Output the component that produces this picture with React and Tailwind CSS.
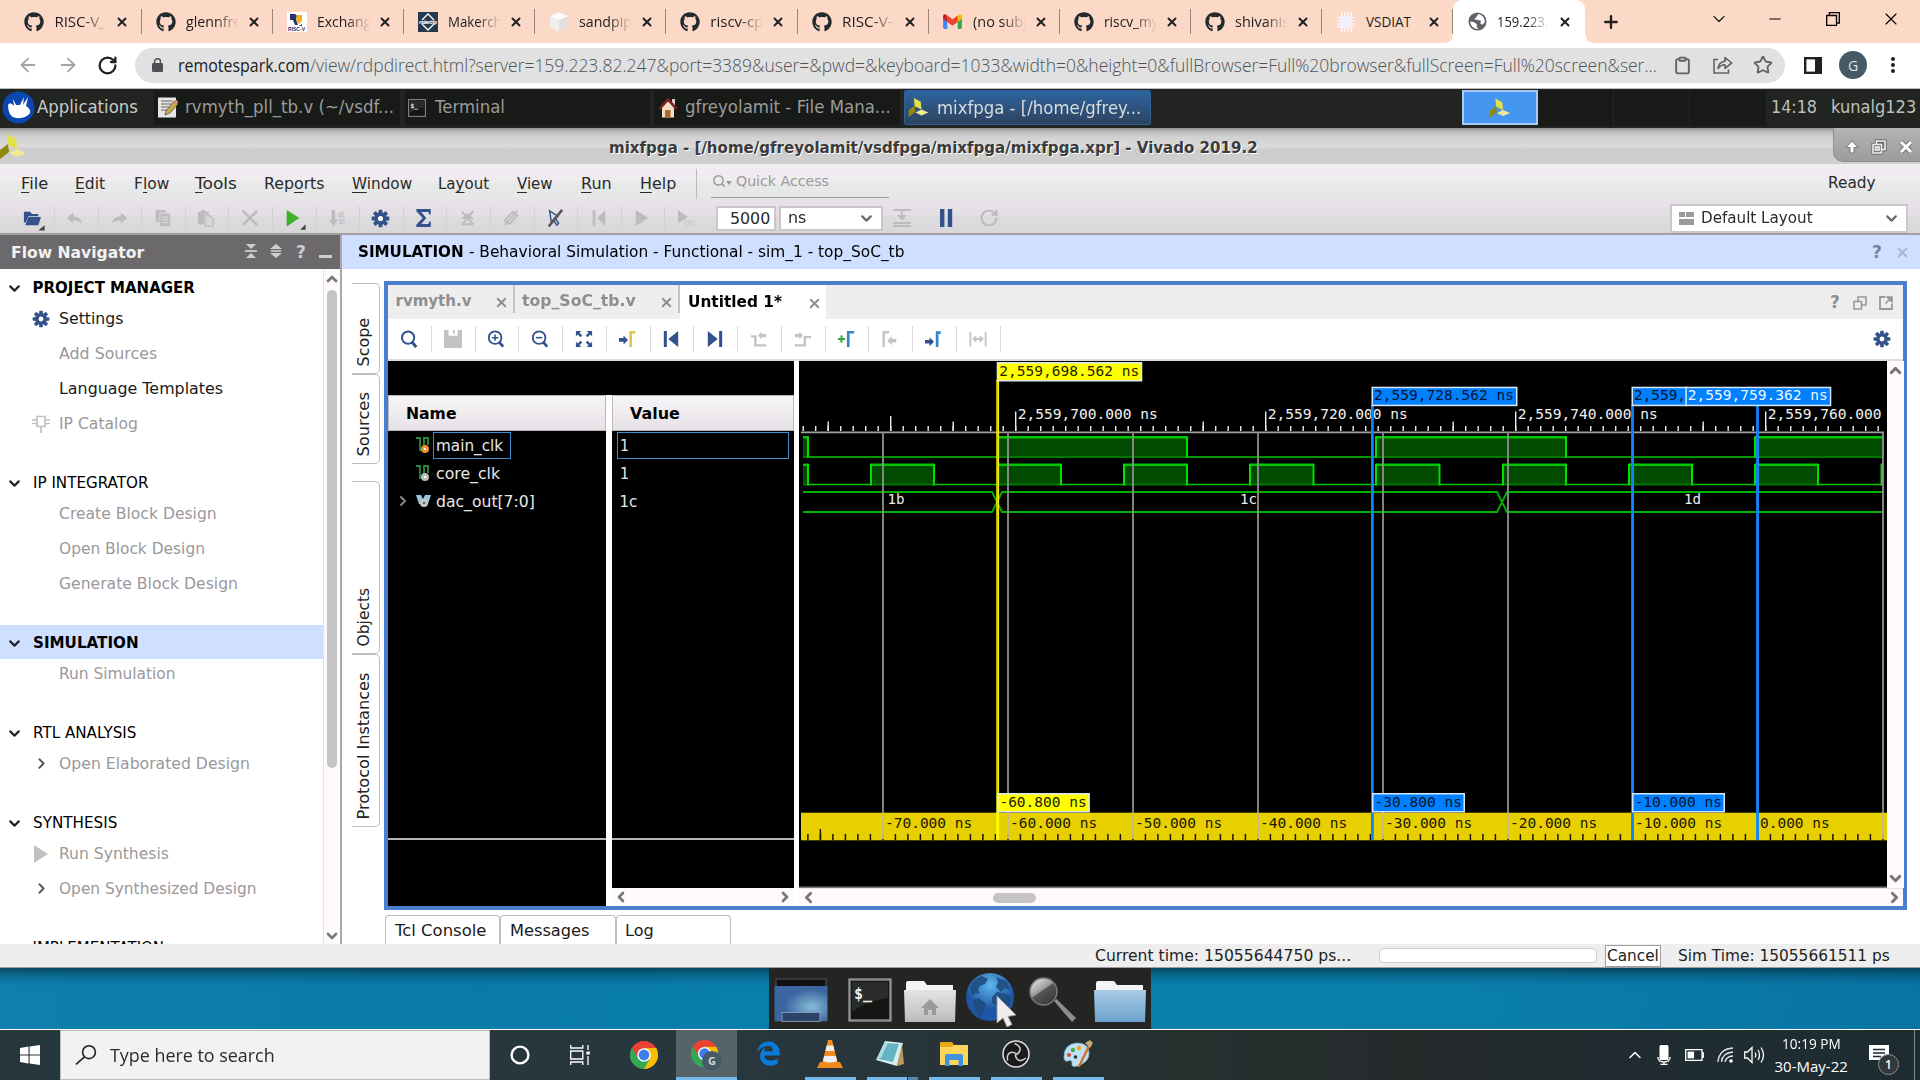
import React, { useLayoutEffect, useRef, useState } from "react";
import { FaGithub } from "react-icons/fa";
import { FaEdgeLegacy } from "react-icons/fa6";
import {
  ArrowLeft, ArrowRight, RotateCw, Clipboard, Star, Plus, X, Minus, ChevronDown, ChevronUp,
  ChevronLeft, ChevronRight, Search,
} from "lucide-react";

const UI = "font-['DejaVu_Sans',sans-serif]";
const WEB = "font-['Open_Sans','Noto_Sans',sans-serif]";

/* Single line of text stretched or condensed to an exact width. */
function Fit({ w, dy = 1, className = "", children }) {
  const ref = useRef(null);
  const [scale, setScale] = useState(1);
  useLayoutEffect(() => {
    const measure = () => {
      const n = ref.current && ref.current.offsetWidth;
      if (n) setScale(w / n);
    };
    measure();
    document.fonts.ready.then(measure);
  }, [w]);
  return (
    <span className={"inline-block shrink-0 whitespace-pre leading-none " + className} style={{ width: w }}>
      <span ref={ref} className="inline-block origin-left" style={{ transform: `translateY(${dy}px) scaleX(${scale})` }}>
        {children}
      </span>
    </span>
  );
}

function Vivado({ className }) {
  return (
    <svg viewBox="0 0 26 25" className={className}>
      <path d="M7 0 L16 5 L17 15 L8 11Z" fill="#e3e04c" />
      <path d="M8 10 L9 18 L0 25 L0 16Z" fill="#8d8a0c" />
      <path d="M9 19 L17 15 L26 19 L17 23Z" fill="#efeb92" />
    </svg>
  );
}

function Gear({ className = "w-[18px] h-[18px]" }) {
  return (
    <svg viewBox="-10 -10 20 20" className={className}>
      {[0, 45, 90, 135].map((a) => (
        <rect key={a} x="-2" y="-9.3" width="4" height="18.6" rx="0.8" fill="#33528c" transform={`rotate(${a})`} />
      ))}
      <circle r="6.6" fill="#33528c" />
      <circle r="2.7" fill="#fff" />
    </svg>
  );
}

/* ---------- browser ---------- */

const GmailIcon = () => (
  <svg viewBox="0 0 20 16" className="w-[19px] h-[15px]">
    <path d="M0 2 L4.5 5 V16 H1.5 Q0 16 0 14.5Z" fill="#4285f4" />
    <path d="M20 2 L15.5 5 V16 H18.5 Q20 16 20 14.5Z" fill="#34a853" />
    <path d="M15.5 1.5 Q20 -1.5 20 2.5 V5 L15.5 8.5Z" fill="#fbbc04" />
    <path d="M4.5 1.5 Q0 -1.5 0 2.5 V5 L4.5 8.5Z" fill="#c5221f" />
    <path d="M4.5 1.5 L10 5.7 L15.5 1.5 V8.5 L10 12.5 L4.5 8.5Z" fill="#ea4335" />
  </svg>
);
const RiscIcon = () => (
  <svg viewBox="0 0 20 20" className="w-5 h-5">
    <rect width="20" height="20" fill="#fff" />
    <path d="M3 2 H8 Q11 3 9 7 L11 13 H8 L6 8 H3Z" fill="#283272" />
    <path d="M10 3 H15 V9 L12 12 L9 8Z" fill="#f6b21a" />
    <path d="M15 4 V12 L12 14 H15Z" fill="#283272" />
    <text x="1" y="18.6" fontSize="5" fontWeight="bold" fill="#283272" fontFamily="Liberation Sans, sans-serif" textLength="17">RISC-V</text>
  </svg>
);
const MakerIcon = () => (
  <svg viewBox="0 0 20 20" className="w-5 h-5">
    <rect width="20" height="20" fill="#24394f" />
    <path d="M4 8 L10 2 L16 8 M4 12 L10 18 L16 12" fill="none" stroke="#fff" strokeWidth="1.3" />
    <text x="1" y="11.6" fontSize="4.6" fontWeight="bold" fill="#fff" fontFamily="Liberation Sans, sans-serif" textLength="18">makerchip</text>
  </svg>
);
const CubeIcon = () => (
  <svg viewBox="0 0 20 20" className="w-5 h-5">
    <path d="M10 0.5 L19 4 V15 L10 19.5 L1 15 V4Z" fill="#f1efed" />
    <path d="M10 8 L19 4 V15 L10 19.5Z" fill="#e2dfdc" />
    <path d="M10 0.5 L19 4 L10 8 L1 4Z" fill="#fbfaf9" />
  </svg>
);
const ChipIcon = () => (
  <svg viewBox="0 0 20 20" className="w-5 h-5">
    <path d="M6 0 V20 M9 0 V20 M12 0 V20 M15 0 V20 M1 6 H19 M1 9 H19 M1 12 H19 M1 15 H19" stroke="#fff" strokeWidth="1.2" />
    <rect x="4" y="4" width="12" height="12" fill="#f5eefc" />
  </svg>
);
const GlobeIcon = () => (
  <svg viewBox="0 0 20 20" className="w-[19px] h-[19px]">
    <circle cx="10" cy="10" r="9.5" fill="#5f6368" />
    <path d="M11 2 L9 5 L6.5 7.5 L10 8.5 L13.5 9 L13 12 L15 13.5 L17.5 11 A8 8 0 0 0 11 2Z M2.3 10 L6 10.5 L9.5 13 L9 15.5 L11 17.8 A8 8 0 0 1 2.3 10Z" fill="#fff" />
  </svg>
);
const Hub = () => <FaGithub className="w-5 h-5 text-[#24292e]" />;

const TABS = [
  [<Hub />, "RISC-V_", 51, true],
  [<Hub />, "glennfre", 55, true],
  [<RiscIcon />, "Exchang", 54, true],
  [<MakerIcon />, "Makerch", 54, true],
  [<CubeIcon />, "sandpip", 53, true],
  [<Hub />, "riscv-cp", 53, true],
  [<Hub />, "RISC-V-", 51, true],
  [<GmailIcon />, "(no subj", 54, true],
  [<Hub />, "riscv_my", 55, true],
  [<Hub />, "shivanis", 54, true],
  [<ChipIcon />, "VSDIAT", 45, false],
];

function Tab({ icon, text, w, fade, active }) {
  return (
    <div className={"flex items-center shrink-0 w-[131.2px] h-full pl-[14px] " + (active ? "bg-white rounded-t-[9px]" : "")}>
      <span className="w-[20px] flex justify-center shrink-0">{icon}</span>
      <span className={"ml-[10px] w-[54px] shrink-0 overflow-hidden py-1 flex " + (fade ? "[mask-image:linear-gradient(to_right,black_55%,transparent_98%)]" : "")}>
        <Fit w={w} dy={-0.5} className={WEB + " text-[15px] leading-[20px] text-[#1c1c1e]"}>{text}</Fit>
      </span>
      <X className="ml-[7px] w-[14px] h-[14px] text-[#202124] shrink-0" strokeWidth={3.4} />
      {!active && <span className="ml-auto w-px h-[25px] bg-[#98847a]" />}
    </div>
  );
}

function Browser() {
  return (
    <>
      <div className="h-[43px] bg-[#fcd9c7] flex pl-[10.4px]">
        {TABS.map(([icon, text, w, fade], i) => (
          <Tab key={i} icon={icon} text={text} w={w} fade={fade} />
        ))}
        <span className="w-0 flex justify-end items-end shrink-0"><svg viewBox="0 0 10 10" className="w-[10px] h-[10px] shrink-0"><path d="M10 0 V10 H0 Q10 10 10 0Z" fill="#fff" /></svg></span>
        <Tab icon={<GlobeIcon />} text="159.223." w={51} fade active />
        <svg viewBox="0 0 10 10" className="w-[10px] h-[10px] shrink-0 self-end"><path d="M0 0 V10 H10 Q0 10 0 0Z" fill="#fff" /></svg>
        <div className="flex items-center flex-1">
          <Plus className="ml-[6px] w-[20px] h-[20px] text-[#202124]" strokeWidth={2.8} />
          <ChevronDown className="ml-[88px] w-[20px] h-[20px] text-[#202124] -mt-1.5" strokeWidth={1.5} />
          <Minus className="ml-[37px] w-[18px] h-[18px] text-black -mt-1.5" strokeWidth={1.6} />
          <svg viewBox="0 0 14 14" className="ml-[42px] w-[14px] h-[14px] -mt-1.5">
            <path d="M0.7 3.5 H10.5 V13.3 H0.7Z M3.3 3.2 V0.7 H13.3 V11 H10.8" fill="none" stroke="#000" strokeWidth="1.3" />
          </svg>
          <X className="ml-[41px] w-[20px] h-[20px] text-black -mt-1.5" strokeWidth={1.4} />
        </div>
      </div>
      <div className="h-[46px] pb-px bg-white border-b border-[#bdbdbd] flex items-center">
        <ArrowLeft className="ml-[17px] w-[22px] h-[22px] text-[#a5a5a5] shrink-0" strokeWidth={2} />
        <ArrowRight className="ml-[18px] w-[22px] h-[22px] text-[#a5a5a5] shrink-0" strokeWidth={2} />
        <RotateCw className="ml-[18px] w-[21px] h-[21px] text-[#202124] shrink-0" strokeWidth={2.6} />
        <div className="ml-[17px] w-[1650px] h-[35px] rounded-full bg-[#e1e1e1] flex items-center shrink-0">
          <svg viewBox="0 0 11 14" className="ml-[17px] w-[11px] h-[14px]">
            <rect y="5" width="11" height="9" rx="1.2" fill="#4d5156" />
            <path d="M2.6 5 V3.3 Q2.6 0.8 5.5 0.8 T8.4 3.3 V5" fill="none" stroke="#4d5156" strokeWidth="1.4" />
          </svg>
          <Fit w={132} dy={-0.5} className={WEB + " ml-[15px] text-[18px] text-[#202124]"}>remotespark.com</Fit>
          <Fit w={1347} dy={-0.5} className={WEB + " text-[18px] font-light text-[#505357]"}>/view/rdpdirect.html?server=159.223.82.247&port=3389&user=&pwd=&keyboard=1033&width=0&height=0&fullBrowser=Full%20browser&fullScreen=Full%20screen&ser...</Fit>
          <Clipboard className="ml-[16px] w-[19px] h-[19px] text-[#5f6368]" strokeWidth={2.4} />
          <svg viewBox="0 0 20 18" className="ml-[21px] w-[20px] h-[18px]">
            <path d="M5 3.5 H1 V17 H15.5 V13.5" fill="none" stroke="#5f6368" strokeWidth="1.6" />
            <path d="M5 12.5 Q5.5 6 12 5.2 V1.5 L18.7 7 L12 12.3 V8.8 Q8 8.7 5 12.5Z" fill="none" stroke="#5f6368" strokeWidth="1.6" strokeLinejoin="round" />
          </svg>
          <Star className="ml-[20px] w-[20px] h-[20px] text-[#5f6368]" strokeWidth={2.2} />
        </div>
        <svg viewBox="0 0 18 17" className="ml-[19px] w-[18px] h-[17px]">
          <rect x="1.2" y="1.2" width="15.6" height="14.6" fill="#fff" stroke="#202124" strokeWidth="2.4" />
          <rect x="11" y="0" width="7" height="17" fill="#202124" />
        </svg>
        <div className={WEB + " ml-[17px] w-[28px] h-[28px] rounded-full bg-[#455a64] text-[#dfe6ea] text-[14px] flex items-center justify-center"}>G</div>
        <svg viewBox="0 0 4 16" className="ml-[24px] w-[4px] h-[16px]">
          <circle cx="2" cy="2" r="2" fill="#202124" /><circle cx="2" cy="8" r="2" fill="#202124" /><circle cx="2" cy="14" r="2" fill="#202124" />
        </svg>
      </div>
    </>
  );
}

/* ---------- remote desktop panel ---------- */

const TermIcon = ({ className }) => (
  <svg viewBox="0 0 44 44" className={className}>
    <rect x="1.5" y="1.5" width="41" height="41" fill="#151614" stroke="#8f8f8f" strokeWidth="2.4" />
    <path d="M4 4 H40 V20 Q20 22 4 34Z" fill="#2a2c29" />
    <text x="6" y="21" fontSize="15" fontWeight="bold" fill="#f0f0f0" fontFamily="DejaVu Sans Mono, monospace">$_</text>
  </svg>
);

function Panel() {
  return (
    <div className={UI + " h-[39px] bg-[#222421] flex items-center text-[17px] pb-[2px]"}>
      <svg viewBox="0 0 33 33" className="ml-[2px] w-[33px] h-[33px] shrink-0">
        <circle cx="16.5" cy="16.5" r="16" fill="#0a48b0" />
        <path d="M6 14 Q8 10 12 15 L11 8 L14 14 L18 14 L22 6 L21 14 L26 6 L24 15 Q29 18 28 22 Q24 28 14 27 Q6 26 6 14Z" fill="#fff" />
      </svg>
      <Fit w={101} dy={-0.5} className="ml-[2px] text-[#c9cac8]">Applications</Fit>
      <div className="ml-[16px] w-[246px] h-[35px] bg-[#181a18] flex items-center text-[#9b9c9a] shrink-0">
        <svg viewBox="0 0 20 21" className="ml-[4px] w-[20px] h-[21px]">
          <rect x="0" y="0.5" width="18" height="20" fill="#e6e6e4" />
          <path d="M3 4 H14 M3 7 H13 M3 10 H12 M3 13 H9" stroke="#8d8d8d" strokeWidth="1.3" />
          <path d="M8 14 L16 4 L20 7 L12 16 L7 18Z" fill="#c9a94c" stroke="#554" strokeWidth="0.8" />
          <circle cx="18" cy="5" r="2" fill="#d88" />
        </svg>
        <Fit w={209} dy={-0.5} className="ml-[7px]">rvmyth_pll_tb.v (~/vsdf...</Fit>
      </div>
      <div className="ml-[5px] w-[245px] h-[35px] bg-[#181a18] flex items-center text-[#9b9c9a] shrink-0">
        <TermIcon className="ml-[3px] w-[18px] h-[18px]" />
        <Fit w={70} dy={-0.5} className="ml-[9px]">Terminal</Fit>
      </div>
      <div className="ml-[4px] w-[246px] h-[35px] bg-[#181a18] flex items-center text-[#9b9c9a] shrink-0">
        <svg viewBox="0 0 18 20" className="ml-[5px] w-[18px] h-[20px]">
          <rect x="13" y="1" width="3" height="7" fill="#d8cfc6" />
          <path d="M3 9 L9 3 L15 9 V19.5 H3Z" fill="#f0ddc8" />
          <path d="M0.5 11 L9 1.5 L17.5 11" fill="none" stroke="#7c2320" strokeWidth="2.6" />
          <rect x="6" y="12" width="5.5" height="7.5" fill="#b0652e" />
        </svg>
        <Fit w={206} dy={-0.5} className="ml-[8px]">gfreyolamit - File Mana...</Fit>
      </div>
      <div className="ml-[4px] w-[247px] h-[35px] rounded-[2px] border border-[#2f6299] bg-linear-to-b from-[#2c64a0] to-[#2d435f] flex items-center text-[#dadbdc] shrink-0">
        <Vivado className="ml-[3px] w-[21px] h-[19px]" />
        <Fit w={204} dy={0} className="ml-[8px] mt-0.5">mixfpga - [/home/gfrey...</Fit>
      </div>
      <div className="ml-[311px] w-[76px] h-[35px] bg-[#4596f0] border-2 border-[#a9cbf2] flex items-center justify-center shrink-0">
        <Vivado className="w-[20px] h-[20px]" />
      </div>
      <div className="w-[228px] h-[36px] bg-[#181a18] flex shrink-0">
        <span className="w-[76px] border-r border-[#242624]" />
        <span className="w-[76px] border-r border-[#242624]" />
      </div>
      <Fit w={46} dy={-0.5} className="ml-[5px] text-[#bfc0be]">14:18</Fit>
      <Fit w={85} dy={-0.5} className="ml-[14px] text-[#bfc0be]">kunalg123</Fit>
    </div>
  );
}

function TitleBar() {
  return (
    <div className={UI + " h-[36px] flex items-start bg-[linear-gradient(#929292,#b9b9b9_10%,#d2d2d2_26%,#dadada_50%,#cdcdcd_60%,#cfcfcf)] text-[15px] font-bold text-[#3b3b3b]"}>
      <Vivado className="mt-[6px] w-[26px] h-[25px]" />
      <Fit w={649} className="ml-[582.5px] mt-[12px] [text-shadow:1px_1px_0_#fff]">mixfpga - [/home/gfreyolamit/vsdfpga/mixfpga/mixfpga.xpr] - Vivado 2019.2</Fit>
      <div className="ml-auto w-[87px] h-[34px] rounded-bl-[10px] border-l border-b border-[#8f8f8f] bg-linear-to-b from-[#b4b4b4] to-[#9c9c9c] flex items-center pl-[10px] pt-1 gap-[11px]">
        <svg viewBox="0 0 16 16" className="w-4 h-4"><path d="M8 2 L14 8.5 H10 V14 H6 V8.5 H2Z" fill="#fff" stroke="#777" /></svg>
        <svg viewBox="0 0 16 16" className="w-4 h-4"><path d="M5.5 5 V2 H14 V10.5 H11 M2 5.5 H10.5 V14 H2Z" fill="none" stroke="#6d6d6d" strokeWidth="3.4" /><path d="M5.5 5 V2 H14 V10.5 H11 M2 5.5 H10.5 V14 H2Z M4.5 8 H8 V11 H4.5Z" fill="none" stroke="#eee" strokeWidth="1.6" /></svg>
        <svg viewBox="0 0 16 16" className="w-4 h-4"><path d="M3 3 L13 13 M13 3 L3 13" stroke="#777" strokeWidth="5" /><path d="M3 3 L13 13 M13 3 L3 13" stroke="#fff" strokeWidth="3" /></svg>
      </div>
    </div>
  );
}

const MENU = [
  ["", "F", "ile", 27, 20.5], ["", "E", "dit", 30, 27], ["F", "l", "ow", 35, 29], ["", "T", "ools", 42, 26],
  ["Rep", "o", "rts", 61, 27.5], ["", "W", "indow", 60, 27], ["La", "y", "out", 51, 26], ["", "V", "iew", 36, 28],
  ["", "R", "un", 31, 27.5], ["", "H", "elp", 36, 28],
];
const G = "#bdbbbe";
const B = "#33528c";
const TOOLS = [
  <><path d="M1 3 H8 L10 5.5 H17 V8 H6 L3 15 H1Z" fill={B} /><path d="M6 9 H20 L17 18 H2.5Z" fill={B} /><path d="M24 18 V24 H17Z" fill="#444" /></>,
  <path d="M1 10 L8 4 V8 Q16 8 18 16 Q13 12 8 12.5 V16Z" fill={G} />,
  <path d="M19 10 L12 4 V8 Q4 8 2 16 Q7 12 12 12.5 V16Z" fill={G} />,
  <><path d="M2 1 H13 V4 H6 V15 H2Z" fill={G} /><path d="M7 5 H18 V19 H7Z" fill={G} /><path d="M9 9 H16 M9 12 H16 M9 15 H16" stroke="#e2e0e3" strokeWidth="1.2" /></>,
  <><path d="M1 3 H5 V1 H9 V3 H13 V6 H8 V17 H1Z" fill={G} /><path d="M9 7.5 H14 L18 11 V19 H9Z" fill="#d9d7da" stroke={G} strokeWidth="1.4" /></>,
  <path d="M2 2 L18 18 M18 2 L2 18" stroke={G} strokeWidth="2.6" />,
  <><path d="M3 1 L17 10 L3 19.5Z" fill="#3fae29" /><path d="M24 17 V23 H18Z" fill="#444" /></>,
  <><path d="M4 1 H8 V12 H11 L6 19 L1 12 H4Z" fill={G} /><text x="11" y="9" fontSize="8" fill={G} fontFamily="DejaVu Sans Mono" textLength="8">01</text><text x="11" y="17" fontSize="8" fill={G} fontFamily="DejaVu Sans Mono" textLength="8">10</text></>,
  null,
  <path d="M1.5 0 H17.5 V6 H15.8 L14.8 3.4 H7 L12.5 10 L7 16.6 H14.8 L15.8 14 H17.5 V20 H1.5 V17.5 L8.5 10 L1.5 2.5Z" fill={B} />,
  <path d="M3 3 L16 17 M16 2 L3 18 M5 10 H14 L10 6Z M4 17 H16" fill={G} stroke={G} strokeWidth="2.2" />,
  <path d="M3 13 L12 3 L17 7 L8 17Z M17 2 L3 18" fill="none" stroke={G} strokeWidth="2" />,
  <><path d="M4 2 L13 8 L10 9.5 L14 16 L12 18 L8 12 L6 15Z" fill="none" stroke={B} strokeWidth="1.6" /><path d="M18 1 L3 19.5" stroke="#555" strokeWidth="2.8" /></>,
  <path d="M3 1 H6 V19 H3Z M17 1 V19 L8 10Z" fill={G} />,
  <path d="M3 1 L17 10 L3 19Z" fill={G} />,
  <><path d="M1 1 L12 9 L1 16Z" fill={G} /><text x="8" y="19" fontSize="8" fill={G} fontFamily="DejaVu Sans" textLength="11">(T)</text></>,
];

function Select({ className, children }) {
  return (
    <div className={"bg-white border-2 border-[#c9c7ca] flex items-center shrink-0 " + className}>
      {children}
      <ChevronDown className="ml-auto mr-[6px] w-[17px] h-[17px] text-[#6b6b6b]" strokeWidth={3.2} />
    </div>
  );
}

function Menus() {
  return (
    <div className={UI + " h-[71px] text-[15px] text-[#2a2a2a] border-b-2 border-[#a19fa2] bg-[linear-gradient(#f1ecf1,#efebef_24%,#e7e9e8_30%,#e6e8e7_50%,#e6e1e7_56%,#e4e0e5_72%,#dddbde_78%,#d9d7da)]"}>
      <div className="h-[39px] flex items-center">
        {MENU.map(([a, u, b, w, ml], i) => (
          <span key={i} className="flex" style={{ marginLeft: ml }}>
            <Fit w={w}>{a}<span className="underline underline-offset-[3px]">{u}</span>{b}</Fit>
          </span>
        ))}
        <span className="ml-[20.5px] w-px h-[30px] bg-[#bcbabd]" />
        <div className="ml-[14px] w-[178px] h-[29px] -mt-[1px] border-b border-[#9c9a9d] flex items-center text-[#9b999c] text-[14px]">
          <Search className="w-[14px] h-[14px] ml-px -mt-1" strokeWidth={2.6} />
          <span className="w-0 h-0 border-x-[3px] border-x-transparent border-t-[4px] border-t-[#9b999c]" />
          <Fit w={93} dy={-0.5} className="ml-[4px] -mt-1">Quick Access</Fit>
        </div>
        <Fit w={48} className="ml-auto mr-[44px] -mt-0.5">Ready</Fit>
      </div>
      <div className="h-[30px] flex items-center">
        <div className="flex ml-[11.5px]">
          {TOOLS.map((t, i) => (
            <span key={i} className="w-[43.6px] h-[24px] flex items-center justify-center border-r border-[#d3d1d4] last:border-0 pr-[2px]">
              {t ? <svg viewBox="0 0 20 20" className="w-[20px] h-[18px] overflow-visible">{t}</svg> : <Gear className="w-[19px] h-[19px]" />}
            </span>
          ))}
        </div>
        <div className="ml-[6.5px] w-[60px] h-[25px] border-2 border-[#c9c7ca] bg-white flex items-center justify-end pr-[4px]"><Fit w={40}>5000</Fit></div>
        <Select className="ml-[3px] w-[104px] h-[25px] pl-[7px]"><Fit w={18} dy={0}>ns</Fit></Select>
        <svg viewBox="0 0 18 18" className="ml-[10px] w-[18px] h-[18px]"><path d="M0 1 H18 M0 14 H18 M0 17 H18 M9 2 V8" stroke={G} strokeWidth="1.8" /><path d="M4 6 H14 L9 11.5Z" fill={G} /></svg>
        <svg viewBox="0 0 14 18" className="ml-[28px] w-[14px] h-[18px]"><path d="M1 0 H5.4 V18 H1Z M8.8 0 H13.2 V18 H8.8Z" fill={B} /></svg>
        <RotateCw className="ml-[26px] w-[20px] h-[20px] text-[#bdbbbe]" strokeWidth={2.6} />
        <Select className="ml-auto mr-[12px] w-[238px] h-[29px] pl-[7px]">
          <svg viewBox="0 0 15 13" className="w-[15px] h-[13px]"><path d="M0 0 H6 V5 H0Z M7 0 H15 V5 H7Z M0 7 H15 V13 H0Z" fill="#9b999c" /></svg>
          <Fit w={112} dy={0} className="ml-[7px]">Default Layout</Fit>
        </Select>
      </div>
    </div>
  );
}

/* ---------- flow navigator ---------- */

const IpIcon = () => (
  <svg viewBox="0 0 18 18" className="w-[18px] h-[18px]"><path d="M5 1.5 H13 V11.5 H5Z M0 5 H5 M0 8.5 H5 M13 5 H18 M13 8.5 H18 M9 12 V18" fill="none" stroke="#c3c1c4" strokeWidth="1.7" /></svg>
);
const PlayIcon = () => <svg viewBox="0 0 14 18" className="w-[14px] h-[18px]"><path d="M0 0 L14 9 L0 18Z" fill="#c3c1c4" /></svg>;
const Sub = () => <ChevronRight className="w-[17px] h-[17px] text-[#555]" strokeWidth={2.6} />;

const NAV = [
  { t: "PROJECT MANAGER", w: 162, bold: true, items: [["Settings", 65, <Gear />, true], ["Add Sources", 98], ["Language Templates", 164, null, true], ["IP Catalog", 79, <IpIcon />]] },
  { t: "IP INTEGRATOR", w: 115, items: [["Create Block Design", 158], ["Open Block Design", 146], ["Generate Block Design", 179]] },
  { t: "SIMULATION", w: 106, bold: true, sel: true, items: [["Run Simulation", 116]] },
  { t: "RTL ANALYSIS", w: 103, items: [["Open Elaborated Design", 191, <Sub />]] },
  { t: "SYNTHESIS", w: 84, items: [["Run Synthesis", 110, <PlayIcon />], ["Open Synthesized Design", 198, <Sub />]] },
  { t: "IMPLEMENTATION", w: 132, items: [] },
];

const Help = ({ className }) => <span className={"font-bold text-[17px] leading-none w-[12px] text-center " + className}>?</span>;

function Navigator() {
  return (
    <div className="w-[342px] h-[709px] flex flex-col border-r-2 border-[#aaa8ab] shrink-0">
      <div className="h-[34px] bg-[#6c696c] flex items-center text-[#f2f2f2] font-bold shrink-0">
        <Fit w={133} className="ml-[11px]">Flow Navigator</Fit>
        <svg viewBox="0 0 12 14" className="ml-[101px] w-[12px] h-[14px] -mt-0.5"><path d="M0 7 H12" stroke="#cfcdd0" strokeWidth="1.8" /><path d="M1 0 H11 L6 5Z M1 14 H11 L6 9Z" fill="#cfcdd0" /></svg>
        <svg viewBox="0 0 12 14" className="ml-[13px] w-[12px] h-[14px] -mt-0.5"><path d="M1 7 H11" stroke="#cfcdd0" strokeWidth="1.6" /><path d="M0 5 H12 L6 0Z M0 9 H12 L6 14Z" fill="#cfcdd0" /></svg>
        <Help className="ml-[13px] text-[#cfcdd0]" />
        <span className="ml-[12px] w-[13px] h-[3px] mt-[9px] bg-[#cfcdd0]" />
      </div>
      <div className="flex flex-1 min-h-0">
        <div className="w-[323px] overflow-hidden pt-px bg-white">
          {NAV.map((g) => (
            <div key={g.t} className="mb-[24px]">
              <div className={"h-[34px] flex items-center text-black " + (g.sel ? "bg-[#cfdfff] " : "") + (g.bold ? "font-bold" : "")}>
                <ChevronDown className="ml-[6px] w-[17px] h-[17px] mt-0.5 text-[#222]" strokeWidth={3} />
                <Fit w={g.w} className="ml-[9.5px]">{g.t}</Fit>
              </div>
              <div className="-mt-[3px]">
                {g.items.map(([t, w, icon, on]) => (
                  <div key={t} className={"h-[35px] flex items-center " + (on ? "text-[#1a1a1a]" : "text-[#9a989b]")}>
                    <span className="ml-[28px] w-[26px] flex justify-center">{icon}</span>
                    <Fit w={w} className="ml-[4.5px]">{t}</Fit>
                  </div>
                ))}
              </div>
            </div>
          ))}
        </div>
        <div className="w-[17px] bg-[#fdf9fd] border-l border-[#e4e2e5] flex flex-col items-center">
          <ChevronUp className="mt-[2px] w-[16px] h-[16px] text-[#777]" strokeWidth={4} />
          <span className="mt-[3px] w-[10px] h-[478px] rounded-full bg-[#c5c3c6]" />
          <ChevronDown className="mt-auto w-[16px] h-[16px] text-[#777]" strokeWidth={4} />
        </div>
      </div>
    </div>
  );
}

const SIDE = [
  ["Scope", "h-[91px] pb-[7px]", 49], ["Sources", "h-[90px] pb-[7px]", 64],
  ["Objects", "h-[173px] mt-[17px] pb-[7px]", 59], ["Protocol Instances", "h-[173px] pb-[7px]", 147],
];

/* ---------- waveform ---------- */

const range = (a, b, s) => Array.from({ length: Math.floor((b - a) / s) + 1 }, (_, i) => a + i * s);
const GRID = range(883, 1884, 125);
const MAIN = [[803, 808], [998, 1187], [1376, 1566], [1755, 1883]];
const CORE = [[803, 808], [871, 934], [998, 1061], [1124, 1187], [1250, 1313.5], [1376, 1439.5], [1503, 1566], [1629, 1692], [1755, 1818], [1881.5, 1883]];

function Clock({ pulses, hi, lo }) {
  return (
    <g>
      {pulses.map(([a, b], i) => (
        <g key={a}>
          <rect x={a} y={hi} width={b - a} height={lo - hi} fill="#004b00" />
          <path d={`M${a} ${lo} H${b}`} stroke="#007800" strokeWidth="2" />
          <path d={`M${a} ${hi} H${b}`} stroke="#00c800" strokeWidth="2.4" />
          {i > 0 && <path d={`M${a} ${hi - 1} V${lo + 1}`} stroke="#00e000" strokeWidth="2" />}
          {b < 1883 && <path d={`M${b} ${hi - 1} V${lo + 1}`} stroke="#00e000" strokeWidth="2" />}
          {i < pulses.length - 1 && <path d={`M${b} ${lo} H${pulses[i + 1][0]}`} stroke="#00c800" strokeWidth="1.6" />}
        </g>
      ))}
    </g>
  );
}

function Txt({ x, y, w, fill, children }) {
  return <text x={x} y={y} fill={fill} textLength={w} lengthAdjust="spacingAndGlyphs" fontSize="13.6" fontFamily="DejaVu Sans Mono, monospace">{children}</text>;
}

function Flag({ x, y, w, bg, fg, tw, children }) {
  return (
    <g>
      <rect x={x + 0.75} y={y + 0.75} width={w - 1.5} height="18" fill={bg} stroke="#d9e6f5" strokeWidth="1.5" />
      <Txt x={x + 2.5} y={y + 13.6} w={tw} fill={fg}>{children}</Txt>
    </g>
  );
}

function Wave() {
  return (
    <svg viewBox="799 361 1088 527" className="w-[1088px] h-[527px] block bg-black shrink-0">
      {range(803.2, 1880, 12.5).map((x) => <path key={x} d={`M${x} 426 V431`} stroke="#eee" strokeWidth="1.4" />)}
      {[828.2, 953.2, 1203.2, 1453.2, 1703.2].map((x) => <path key={x} d={`M${x} 421.5 V431`} stroke="#eee" strokeWidth="1.4" />)}
      <path d="M890.7 416 V431" stroke="#eee" strokeWidth="1.4" />
      {[[1015.7, "2,559,700.000 ns"], [1265.7, "2,559,720.000 ns"], [1515.7, "2,559,740.000 ns"], [1765.7, "2,559,760.000"]].map(([x, t]) => (
        <g key={x}><path d={`M${x} 411.5 V431`} stroke="#eee" strokeWidth="1.4" /><Txt x={x + 2} y={418.7} w={t.length * 8.76} fill="#f2f2f2">{t}</Txt></g>
      ))}
      <path d="M801 432.3 H1884" stroke="#a0a0a0" strokeWidth="1.8" />

      <Clock pulses={MAIN} hi={437.3} lo={457} />
      <Clock pulses={CORE} hi={464.8} lo={484.5} />
      <path d="M803 492 H992 L1002 512 H1497 L1507 492 H1883 M803 512 H992 L1002 492 H1497 L1507 512 H1883" fill="none" stroke="#00b400" strokeWidth="1.8" />

      {GRID.map((x) => <path key={x} d={`M${x} 432 V813`} stroke="#909090" strokeWidth="1.8" />)}
      <Txt x={887.5} y={504.3} w={17} fill="#eee">1b</Txt>
      <Txt x={1240} y={504.3} w={17} fill="#eee">1c</Txt>
      <Txt x={1684} y={504.3} w={17} fill="#eee">1d</Txt>

      <rect x="801" y="812.7" width="1086" height="27.6" fill="#e8cf00" />
      {range(807.9, 1884, 12.5).map((x) => <path key={x} d={`M${x} 834 V840.5`} stroke="#1a1700" strokeWidth="1.5" />)}
      <path d="M820.4 829 V840" stroke="#1a1700" strokeWidth="1.5" />
      {GRID.map((x) => <path key={x} d={`M${x} 813 V839`} stroke="#c9bd86" strokeWidth="1.8" />)}
      {["-70.000 ns", "-60.000 ns", "-50.000 ns", "-40.000 ns", "-30.000 ns", "-20.000 ns", "-10.000 ns", "0.000 ns"].map((t, i) => (
        <Txt key={t} x={GRID[i] + 2} y={828} w={t.length * 8.72} fill="#1c1800">{t}</Txt>
      ))}
      <path d="M799 887.3 H1887" stroke="#777" strokeWidth="1.4" />

      {[1372.4, 1632.5, 1757.5].map((x) => <path key={x} d={`M${x} 405 V840`} stroke="#0a84ff" strokeWidth="2.8" />)}
      <path d="M997.7 380 V840" stroke="#fffb00" strokeWidth="2.8" />
      <path d="M997.7 382 V793" stroke="#c9c400" strokeWidth="0.9" />

      <Flag x={996.7} y={362} w={145.6} bg="#ffff00" fg="#222200" tw={140}>2,559,698.562 ns</Flag>
      <Flag x={1371.5} y={386.7} w={146} bg="#0080ff" fg="#04142e" tw={140}>2,559,728.562 ns</Flag>
      <Flag x={1631.5} y={386.7} w={56} bg="#0080ff" fg="#04142e" tw={52}>2,559,</Flag>
      <Flag x={1685.3} y={386.7} w={146} bg="#0080ff" fg="#eef6ff" tw={140}>2,559,759.362 ns</Flag>
      <Flag x={996.9} y={793} w={93} bg="#ffff00" fg="#222200" tw={87.4}>-60.800 ns</Flag>
      <Flag x={1372} y={793} w={93} bg="#0080ff" fg="#04142e" tw={87.4}>-30.800 ns</Flag>
      <Flag x={1632} y={793} w={93} bg="#0080ff" fg="#04142e" tw={87.4}>-10.000 ns</Flag>
    </svg>
  );
}

const D = "#33528c";
const Y = "#e0c84a";
const C = "#3385c6";
const Q = "#c4c2c5";
const EDGE = "M15 19 V3 H19";
const ARR = "M0 9 H5 V6 L10 11 L5 16 V13 H0Z";
const WTOOLS = [
  <><circle cx="9" cy="8.5" r="6.8" fill="none" stroke={D} strokeWidth="2.2" /><path d="M13.5 13.5 L18 19" stroke={D} strokeWidth="3.4" /></>,
  <><path d="M0 0 H20 V20 H0Z" fill={Q} /><path d="M5 0 V6.5 H15 V0 H12 V4 H10 V0Z" fill="#fff" /></>,
  <><circle cx="9" cy="8.5" r="7" fill="none" stroke={D} strokeWidth="2" /><path d="M13.5 13.5 L18 18.5" stroke={D} strokeWidth="3.2" /><path d="M5.5 8.5 H12.5 M9 5 V12" stroke={D} strokeWidth="1.7" /></>,
  <><circle cx="9" cy="8.5" r="7" fill="none" stroke={D} strokeWidth="2" /><path d="M13.5 13.5 L18 18.5" stroke={D} strokeWidth="3.2" /><path d="M5.5 8.5 H12.5" stroke={D} strokeWidth="1.7" /></>,
  <path d="M1 1 H7 L5 3 L8 6 L6 8 L3 5 L1 7Z M19 1 H13 L15 3 L12 6 L14 8 L17 5 L19 7Z M1 19 H7 L5 17 L8 14 L6 12 L3 15 L1 13Z M19 19 H13 L15 17 L12 14 L14 12 L17 15 L19 13Z" fill={D} />,
  <><path d={ARR} fill={D} /><path d="M13 19 V2.5 H18" fill="none" stroke={Y} strokeWidth="3" /></>,
  <path d="M2 1 H5.4 V19 H2Z M18 1 V19 L7 10Z" fill={D} />,
  <path d="M14.6 1 H18 V19 H14.6Z M2 1 V19 L13 10Z" fill={D} />,
  <><path d="M1 7 H6 V17 H18" fill="none" stroke={Q} strokeWidth="2.6" /><path d="M9 6 L13 2 V4.5 H18 V8 H13 V10.5Z" fill={Q} /></>,
  <><path d="M1 17 H12 V8 H19" fill="none" stroke={Q} strokeWidth="2.6" /><path d="M10 6 L6 2 V4.5 H1 V8 H6 V10.5Z" fill={Q} /></>,
  <><path d="M1 10 H9 M5 6 V14" stroke="#3aa640" strokeWidth="2.4" /><path d="M12.5 19 V2.5 H19" fill="none" stroke={C} strokeWidth="3" /></>,
  <><path d="M3 19 V2.5 H9" fill="none" stroke={Q} strokeWidth="2.6" /><path d="M7 12 L12 7 V10 H17 V14 H12 V17Z" fill={Q} /></>,
  <><path d="M0 11 H5 V8 L10 13 L5 18 V15 H0Z" fill={D} /><path d={EDGE} transform="translate(-1.5 0)" fill="none" stroke={C} strokeWidth="3" /></>,
  <path d="M1.5 2 V18 M18.5 2 V18 M5 10 H15 M8 7 L5 10 L8 13 M12 7 L15 10 L12 13" fill="none" stroke={Q} strokeWidth="2" />,
];

function SigIcon({ dot }) {
  return (
    <svg viewBox="0 0 14 18" className="w-[14px] h-[18px]">
      <path d="M0 2 H4 V14 H8 V2 H12 V9" fill="none" stroke="#2a8a3c" strokeWidth="1.8" />
      <circle cx="9" cy="13" r="4" fill={dot} /><circle cx="9" cy="13" r="1.3" fill="#fff" />
    </svg>
  );
}

function DocTab({ t, w, cls, active }) {
  return (
    <div className={"flex items-center shrink-0 font-bold " + (active ? "bg-white text-black h-[34px] " : "text-[#8f8d90] h-[28px] border-r-2 border-[#c4c2c5] ") + cls}>
      <Fit w={w} dy={0}>{t}</Fit>
      <X className="ml-auto mr-[4px] w-[15px] h-[15px] text-[#8f8d90] mt-0.5" strokeWidth={3} />
    </div>
  );
}

const HEAD = "h-[36px] bg-linear-to-b from-[#f8f5f8] to-[#e6e1e6] border border-[#bbb9bc] flex items-center font-bold text-black shrink-0";

function Editor() {
  return (
    <div className="ml-[4px] mt-[12px] w-[1523px] h-[629px] border-[4px] border-[#4a7fd0] flex flex-col shrink-0">
      <div className="h-[34px] bg-[#eee] flex items-start shrink-0">
        <DocTab t="rvmyth.v" w={76} cls="w-[127px] pl-[7.5px] pt-[5px]" />
        <DocTab t="top_SoC_tb.v" w={114} cls="w-[165px] pl-[7px] pt-[5px]" />
        <DocTab t="Untitled 1*" w={94} cls="w-[146px] pl-[7.5px]" active />
        <div className="ml-auto flex items-center h-full text-[#8f8d90] mr-[10px] pt-px">
          <Help className="mr-[12px]" />
          <svg viewBox="0 0 14 14" className="w-[14px] h-[14px] mr-[12px]"><path d="M1 5.5 H8.5 V13 H1Z M5 5 V1 H13 V9 H9" fill="none" stroke="#9a989b" strokeWidth="1.6" /></svg>
          <svg viewBox="0 0 14 14" className="w-[14px] h-[14px]"><path d="M6 1 H1 V13 H13 V8" fill="none" stroke="#9a989b" strokeWidth="1.8" /><path d="M8 1 H13 V6Z M6.5 7.5 L11.5 2.5" fill="#9a989b" stroke="#9a989b" strokeWidth="1.6" /></svg>
        </div>
      </div>
      <div className="h-[42px] bg-white border-b-2 border-[#dcdadd] flex items-center shrink-0">
        {WTOOLS.map((t, i) => (
          <span key={i} className="w-[43.75px] h-[26px] flex items-center justify-center border-r border-[#dad8db] shrink-0 pr-px">
            <svg viewBox="0 0 20 20" className="w-[18px] h-[18px]">{t}</svg>
          </span>
        ))}
        <span className="ml-auto mr-[12px] flex"><Gear /></span>
      </div>
      <div className="flex flex-1 min-h-0 bg-white">
        <div className="w-[406px] bg-white flex flex-col shrink-0">
          <div className="h-[34px] bg-black shrink-0" />
          <div className="flex flex-1">
            <div className="w-[218px] bg-black flex flex-col text-[#e8e8e8]">
              <div className={HEAD}><Fit w={50} className="ml-[17px]">Name</Fit></div>
              <div className="h-[28px] flex items-center">
                <span className="ml-[28px] mr-[3px]"><SigIcon dot="#f08a24" /></span>
                <span className="border border-[#3f8fd0] w-[78px] h-[27px] flex items-center pl-[2px]"><Fit w={67}>main_clk</Fit></span>
              </div>
              <div className="h-[28px] flex items-center">
                <span className="ml-[28px] mr-[6px]"><SigIcon dot="#b9b9b9" /></span>
                <Fit w={64}>core_clk</Fit>
              </div>
              <div className="h-[28px] flex items-center">
                <ChevronRight className="ml-[7px] w-[16px] h-[16px] text-[#8b8b8b]" strokeWidth={2.8} />
                <svg viewBox="0 0 15 14" className="ml-[5px] mr-[5px] w-[15px] h-[14px]"><path d="M0 1 H5 L7 5 L9 1 H15 L12 10 H3Z" fill="#9cc4dd" /><circle cx="8" cy="9" r="4" fill="#c9c9c9" /><circle cx="8" cy="9" r="1.3" fill="#666" /></svg>
                <Fit w={99}>dac_out[7:0]</Fit>
              </div>
              <div className="mt-auto border-t-2 border-[#b5b5b5] h-[68px]" />
            </div>
            <div className="ml-[5.5px] w-[182px] bg-black flex flex-col text-[#e8e8e8]">
              <div className={HEAD}><Fit w={50} className="ml-[17px]">Value</Fit></div>
              <div className="h-[28px] flex items-center"><span className="ml-[5px] border border-[#3f8fd0] w-[172px] h-[27px] flex items-center pl-[2px]"><Fit w={9.5}>1</Fit></span></div>
              <div className="h-[28px] flex items-center pl-[8px]"><Fit w={9.5}>1</Fit></div>
              <div className="h-[28px] flex items-center pl-[8px]"><Fit w={18}>1c</Fit></div>
              <div className="mt-auto border-t-2 border-[#b5b5b5] h-[50px]" />
              <div className="h-[18px] bg-[#fdf9fd] flex items-center justify-between px-px">
                <ChevronLeft className="w-[16px] h-[16px] text-[#777]" strokeWidth={4} />
                <ChevronRight className="w-[16px] h-[16px] text-[#777]" strokeWidth={4} />
              </div>
            </div>
          </div>
        </div>
        <div className="ml-[5px] flex-1 min-w-0 flex flex-col">
          <div className="flex h-[527px]">
            <Wave />
            <div className="flex-1 bg-[#fdf9fd] flex flex-col items-center justify-between py-[1px]">
              <ChevronUp className="w-[17px] h-[17px] text-[#777] shrink-0" strokeWidth={4} />
              <ChevronDown className="w-[17px] h-[17px] text-[#777] shrink-0" strokeWidth={4} />
            </div>
          </div>
          <div className="flex-1 bg-[#fdf9fd] border-t border-[#e4e2e5] flex items-center">
            <ChevronLeft className="ml-[1px] w-[17px] h-[17px] text-[#777]" strokeWidth={4} />
            <span className="ml-[176px] w-[43px] h-[10px] rounded-full bg-[#c5c3c6]" />
            <ChevronRight className="ml-auto w-[17px] h-[17px] text-[#777]" strokeWidth={4} />
          </div>
        </div>
      </div>
    </div>
  );
}

function Simulation() {
  return (
    <div className="flex-1 flex flex-col bg-white">
      <div className="h-[34px] bg-[#cfdfff] flex items-center text-black shrink-0">
        <Fit w={106} dy={0} className="ml-[15.5px] font-bold">SIMULATION</Fit>
        <Fit w={440} dy={0}> - Behavioral Simulation - Functional - sim_1 - top_SoC_tb</Fit>
        <Help className="ml-auto text-[#77839c]" />
        <X className="ml-[12px] mr-[10px] w-[15px] h-[15px] text-[#a9b5cf]" strokeWidth={3} />
      </div>
      <div className="flex h-[642px]">
        <div className="w-[38px] pl-[9.5px] pt-[14px] flex flex-col shrink-0 text-[#222]">
          {SIDE.map(([t, c, w]) => (
            <div key={t} className={"w-[28px] border border-l-0 border-[#bebcbf] rounded-r-[5px] flex items-end pl-[3px] " + c}>
              <span className="w-[18px] flex items-end" style={{ height: w }}>
                <span className="block origin-bottom-left -rotate-90 translate-x-[17px]"><Fit w={w} dy={-1} className="align-bottom">{t}</Fit></span>
              </span>
            </div>
          ))}
        </div>
        <Editor />
      </div>
      <div className="flex-1 pl-[43px] pt-[4px] flex items-stretch text-[#1a1a1a]">
        {[["Tcl Console", 91], ["Messages", 80], ["Log", 29]].map(([t, w]) => (
          <div key={t} className="w-[115.3px] border border-b-0 border-[#bebcbf] rounded-t-[4px] flex items-center pl-[8.5px]"><Fit w={w} dy={0.5}>{t}</Fit></div>
        ))}
      </div>
    </div>
  );
}

/* ---------- desktop, dock, taskbar ---------- */

const Folder = ({ a, b, children }) => (
  <svg viewBox="0 0 52 42" className="w-[52px] h-[42px]">
    <path d="M2 8 V2 Q2 0 4 0 H20 L23 4 H49 V12 H2Z" fill="#f4f4f4" />
    <defs><linearGradient id={"f" + a.slice(1)} x2="0" y2="1"><stop stopColor={a} /><stop offset="1" stopColor={b} /></linearGradient></defs>
    <path d="M0 9 H52 L51 41 H1Z" fill={`url(#f${a.slice(1)})`} />
    {children}
  </svg>
);

function Desktop() {
  return (
    <div className="h-[62px] flex justify-center border-b border-white bg-[linear-gradient(rgba(0,0,0,0.42),rgba(0,0,0,0.15)_14%,transparent_30%),linear-gradient(100deg,#0d80ae,#087ba9_25%,#0a80ae_50%,#0a7fac_75%,#0874a4)]">
      <div className="w-[382px] bg-[#242522] flex items-center pt-[2px]">
        <svg viewBox="0 0 54 44" className="ml-[5px] w-[54px] h-[44px]">
          <defs><radialGradient id="desk" cx="0.7" cy="0.6"><stop stopColor="#86bcd6" /><stop offset="1" stopColor="#3c66a2" /></radialGradient></defs>
          <rect x="2" y="1" width="50" height="42" fill="#111" stroke="#555" /><rect x="0.5" y="8" width="53" height="35" fill="url(#desk)" />
          <rect x="8" y="34.5" width="38" height="9" fill="#2d4468" stroke="#8aa5c4" strokeWidth="0.8" />
        </svg>
        <TermIcon className="ml-[20px] w-[44px] h-[44px]" />
        <span className="ml-[12px] pt-1"><Folder a="#e4e4e4" b="#bcbcbc"><path d="M17 27 L26 18 L35 27 H32 V34 H28 V29 H24 V34 H20 V27Z" fill="#9a9a98" /></Folder></span>
        <svg viewBox="0 0 52 54" className="ml-[10px] w-[52px] h-[54px]">
          <defs><radialGradient id="glb" cx="0.5" cy="0.25"><stop stopColor="#5cb8ee" /><stop offset="1" stopColor="#1f55a5" /></radialGradient></defs>
          <circle cx="24" cy="24" r="24" fill="url(#glb)" />
          <path d="M4 14 Q8 5 16 3 L22 6 L19 11 L14 13 L12 17 L14 21 L9 20 L6 23Z M7 27 L13 25 L20 31 L18 37 L14 45 L10 39Z M30 4 L40 8 L45 17 L39 15 L35 19 L30 14 L32 9Z M26 24 L31 19 L38 20 L46 24 L43 32 L38 40 L33 42 L32 33 L26 30Z" fill="#1d4a7c" opacity="0.85" />
          <path d="M31 23 V50 L37 45 L41 54 L46 51.5 L42 43.5 L50 42Z" fill="#ededed" stroke="#999" strokeWidth="0.8" />
        </svg>
        <svg viewBox="0 0 48 46" className="ml-[10px] w-[48px] h-[46px]">
          <defs><linearGradient id="lens" x2="0.7" y2="1"><stop stopColor="#f2f2f2" /><stop offset="0.5" stopColor="#9c9c9c" /><stop offset="0.55" stopColor="#555" /><stop offset="1" stopColor="#3a3a3a" /></linearGradient></defs>
          <circle cx="15.5" cy="14.5" r="13.5" fill="url(#lens)" stroke="#777" strokeWidth="1.6" />
          <path d="M26 24 L28.5 22 L48 41 L44 45Z" fill="#8d8d8d" />
        </svg>
        <span className="ml-[18px] pt-1"><Folder a="#a8cbe6" b="#6ca3cf" /></span>
      </div>
    </div>
  );
}

const Chrome = ({ className }) => (
  <svg viewBox="-14 -14 28 28" className={className}>
    <path d="M0 0 L-12.1 -7 A14 14 0 0 1 12.1 -7Z" fill="#ea4335" />
    <path d="M0 0 L12.1 -7 A14 14 0 0 1 0 14Z" fill="#fbbc04" />
    <path d="M0 0 L0 14 A14 14 0 0 1 -12.1 -7Z" fill="#34a853" />
    <path d="M-12.1 -7 A14 14 0 0 1 12.1 -7 H0 L-6 3.4Z" fill="#ea4335" />
    <path d="M0 -7 H12.1 A14 14 0 0 1 0 14 L6 3.4Z" fill="#fbbc04" />
    <path d="M0 14 A14 14 0 0 1 -12.1 -7 L-6 3.4 L6 3.4Z" fill="#34a853" />
    <circle r="6.8" fill="#fff" /><circle r="5.4" fill="#3b7ded" />
  </svg>
);

function TaskApp({ line = true, active, children, className = "" }) {
  return (
    <div className={"h-full flex flex-col items-center shrink-0 " + (active ? "w-[61px] bg-[#56646a] " : "w-[62px] ") + className}>
      <span className="flex-1 flex items-center">{children}</span>
      <span className={"h-[3px] " + (line ? "bg-[#76b9ed] " : "") + (active ? "w-full" : "w-[51px]")} />
    </div>
  );
}

function Taskbar() {
  return (
    <div className={WEB + " h-[50px] flex items-center bg-[linear-gradient(to_right,#26363d,#28373d_40%,#26302f_62%,#252a2b_74%,#1f2c32_88%,#1e2b31)]"}>
      <svg viewBox="0 0 20 20" className="ml-[20px] w-[20px] h-[20px]"><path d="M0 3 L8.5 1.6 V9.4 H0Z M9.6 1.4 L20 0 V9.4 H9.6Z M0 10.5 H8.5 V18.4 L0 17Z M9.6 10.5 H20 V20 L9.6 18.6Z" fill="#fff" /></svg>
      <div className="ml-[20px] w-[430px] h-[50px] bg-[#f2f2f2] border border-[#bcbcbc] flex items-center">
        <svg viewBox="0 0 22 20" className="ml-[14px] w-[22px] h-[20px]"><circle cx="14" cy="7.2" r="6.4" fill="none" stroke="#222" strokeWidth="1.6" /><path d="M9.5 11.8 L1 19.4" stroke="#222" strokeWidth="1.6" /></svg>
        <Fit w={165} dy={0} className="ml-[13px] text-[18px] text-[#2b2b2b]">Type here to search</Fit>
      </div>
      <svg viewBox="0 0 20 20" className="ml-[20px] w-[20px] h-[20px]"><circle cx="10" cy="10" r="8.4" fill="none" stroke="#fff" strokeWidth="2.4" /></svg>
      <svg viewBox="0 0 20 20" className="ml-[40px] w-[20px] h-[20px]"><path d="M0.7 0 V3 H12.8 V0 M0.7 6 H12.8 V14 H0.7Z M0.7 20 V17 H12.8 V20 M18 0 V5 M18 11 V20" fill="none" stroke="#fff" strokeWidth="1.3" /><rect x="16.4" y="6.5" width="3.4" height="3" fill="#fff" /></svg>
      <Chrome className="ml-[40px] w-[28px] h-[28px]" />
      <TaskApp active className="ml-[18px]">
        <span className="relative flex -ml-1">
          <Chrome className="w-[27px] h-[27px]" />
          <span className="absolute left-[11px] top-[11px] w-[20px] h-[20px] rounded-full bg-[#455a64] text-[#cfd8dc] text-[11px] font-bold flex items-center justify-center">G</span>
        </span>
      </TaskApp>
      <TaskApp line={false}><FaEdgeLegacy className="w-[25px] h-[27px] text-[#0a7bd8]" /></TaskApp>
      <TaskApp>
        <svg viewBox="0 0 26 28" className="w-[26px] h-[28px]"><path d="M3 22 H23 L26 28 H0Z" fill="#f08a1c" /><path d="M11 0 H15 L21 24 H5Z" fill="#f28a1c" /><path d="M9.8 5.5 H16.3 L17.6 11 H8.4Z M7.2 16 H18.8 L20.2 21 Q13 24 5.8 21Z" fill="#eee" /></svg>
      </TaskApp>
      <div className="w-[62px] h-full flex flex-col items-center">
        <span className="flex-1 flex items-center -ml-1">
          <svg viewBox="0 0 28 27" className="w-[28px] h-[27px]"><path d="M9 1 L27 3 L21 26 L0 20Z" fill="#d8eef0" /><path d="M10 3 L23 4 L17 22 L2 19Z" fill="#63b3c2" /><path d="M9 1 L12 3 L5 18 L1 19Z" fill="#a9dbe3" /><path d="M26 4 L28 24 L21 26Z" fill="#b99a5a" /></svg>
        </span>
        <span className="h-[3px] flex w-[51px]"><span className="w-[40px] bg-[#76b9ed]" /><span className="ml-px w-[10px] bg-[#5586ad]" /></span>
      </div>
      <TaskApp>
        <svg viewBox="0 0 28 24" className="w-[28px] h-[24px]"><path d="M0 1 Q0 0 1 0 H12 L14 3 H28 V23 H0Z" fill="#e8a917" /><path d="M0 5 H12 L14 3 H28 V23 H0Z" fill="#ffd45a" /><path d="M5 24 V14 Q5 12 7 12 H21 Q23 12 23 14 V24 H18.5 V18 H9.5 V24Z" fill="#3f93e0" /></svg>
      </TaskApp>
      <TaskApp>
        <svg viewBox="-14 -14 28 28" className="w-[28px] h-[28px]">
          <circle r="13" fill="#1b1a1c" stroke="#e2e2e2" strokeWidth="1.5" />
          {[0, 120, 240].map((a) => <path key={a} transform={`rotate(${a})`} d="M0 0.5 Q4.5 -1.5 4 -6 Q3 -9 -1.5 -10.5" fill="none" stroke="#cfcfcf" strokeWidth="1.5" />)}
        </svg>
      </TaskApp>
      <TaskApp>
        <svg viewBox="0 0 30 28" className="w-[30px] h-[28px]"><path d="M1 17 Q1 4 14 3 Q25 3 26 12 Q27 22 14 26 Q8 28 9 23 Q9 19 5 21 Q1 22 1 17Z" fill="#bfe0f2" stroke="#86aec6" strokeWidth="0.8" /><circle cx="6" cy="15" r="2" fill="#e0463c" /><circle cx="10" cy="10" r="2.2" fill="#4cae4a" /><circle cx="16" cy="8" r="2.2" fill="#f2a81d" /><circle cx="12.5" cy="17" r="1.8" fill="#26363d" /><path d="M25 5 L27 7 L17 27 L14.5 27Z" fill="#d0742a" /><path d="M22 3 L27 0 L30 3 L27 8Z" fill="#c9a678" /></svg>
      </TaskApp>
      <ChevronUp className="ml-auto w-[20px] h-[20px] text-white" strokeWidth={1.8} />
      <svg viewBox="0 0 14 20" className="ml-[12px] w-[14px] h-[20px]"><rect x="2.5" y="0" width="9" height="15" rx="1.5" fill="#fff" /><path d="M0.8 12 Q1 17 7 17 T13.2 12 M7 17 V19.3 M3.5 19.3 H10.5" fill="none" stroke="#fff" strokeWidth="1.3" /></svg>
      <svg viewBox="0 0 19 12" className="ml-[14px] w-[19px] h-[12px]"><path d="M0.7 0.7 H17 V11.3 H0.7Z M17 4 H18.5 V8 H17" fill="none" stroke="#fff" strokeWidth="1.3" /><rect x="2.6" y="2.6" width="6.5" height="6.8" fill="#fff" /></svg>
      <svg viewBox="0 0 17 16" className="ml-[13px] w-[17px] h-[16px]"><path d="M1 15 Q2 2 16 1 M4.5 15 Q5 6 16 5 M8 15 Q9 9.5 16 9" fill="none" stroke="#e6e6e6" strokeWidth="1.3" /><circle cx="14" cy="14" r="1.8" fill="#fff" /></svg>
      <svg viewBox="0 0 21 18" className="ml-[10px] w-[21px] h-[18px]"><path d="M0.7 6 H3.5 L8 1.5 V16.5 L3.5 12 H0.7Z M11 6.5 Q12.6 9 11 11.5 M14 4 Q17 9 14 14 M17 1.5 Q22 9 17 16.5" fill="none" stroke="#fff" strokeWidth="1.3" /></svg>
      <div className="ml-[9px] w-[74px] flex flex-col items-center text-[15px] text-white gap-[8px]">
        <Fit w={59} dy={0}>10:19 PM</Fit>
        <Fit w={73} dy={0}>30-May-22</Fit>
      </div>
      <span className="ml-[21px] mt-[10px] w-[30px] h-[30px] relative shrink-0">
        <svg viewBox="0 0 20 20" className="w-[20px] h-[20px]"><path d="M0 0 H20 V15 H14 L10 20 V15 H0Z" fill="#fff" /><path d="M4 4.5 H16 M4 8 H16 M4 11.5 H12" stroke="#1f2c32" strokeWidth="1.3" /></svg>
        <span className="absolute left-[9px] top-[9px] w-[21px] h-[21px] rounded-full bg-[#33383a] border border-[#8b8f91] text-white text-[12px] font-semibold flex items-center justify-center">1</span>
      </span>
      <span className="ml-[15px] mr-[5px] w-px h-full bg-[#7c8588]" />
    </div>
  );
}

export default function App() {
  return (
    <div className="w-[1920px] h-[1080px] overflow-hidden flex flex-col bg-white">
      <Browser />
      <Panel />
      <TitleBar />
      <Menus />
      <div className={UI + " flex h-[709px] text-[15px] shrink-0"}>
        <Navigator />
        <Simulation />
      </div>
      <div className={UI + " h-[24px] bg-[#eee] border-b border-[#9f9d9f] flex items-center text-[15px] text-[#1e1e1e] shrink-0"}>
        <Fit w={256} className="ml-[1094.5px]">Current time: 15055644750 ps...</Fit>
        <span className="ml-[28.5px] w-[218px] h-[15px] bg-white border border-[#cfcdd0] rounded-[4px]" />
        <span className="ml-[8px] w-[56px] h-[22px] bg-white border border-[#9f9d9f] flex items-center justify-center"><Fit w={52}>Cancel</Fit></span>
        <Fit w={212} className="ml-[16.5px]">Sim Time: 15055661511 ps</Fit>
      </div>
      <Desktop />
      <Taskbar />
    </div>
  );
}
